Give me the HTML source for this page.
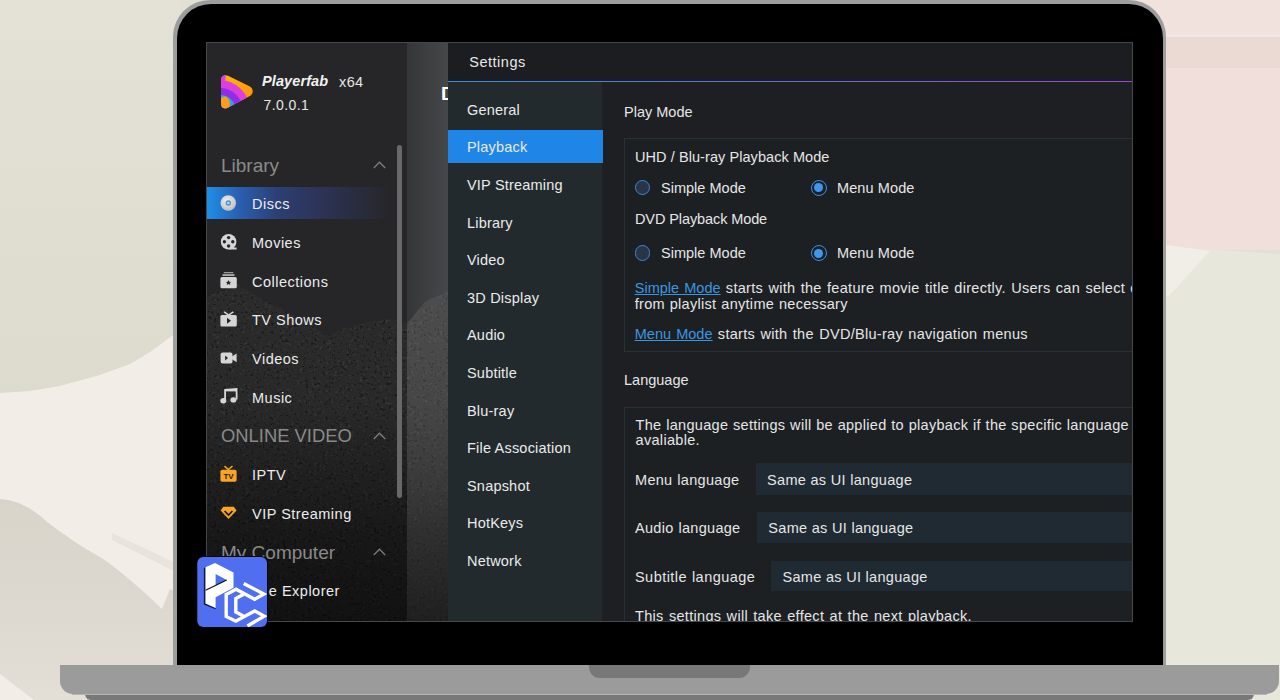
<!DOCTYPE html>
<html><head><meta charset="utf-8">
<style>
*{box-sizing:border-box;margin:0;padding:0}
html,body{width:1280px;height:700px;overflow:hidden;background:#e4e1d6}
body{position:relative;font-family:"Liberation Sans",sans-serif}
.abs{position:absolute}
#bg{position:absolute;left:0;top:0}
#lid{position:absolute;left:173px;top:0px;width:993px;height:670px;background:#9d9d9d;border-radius:37px 37px 0 0}
#bezel{position:absolute;left:177px;top:3.5px;width:986px;height:670px;background:#000;border-radius:34px 34px 0 0}
#base{position:absolute;left:60px;top:665px;width:1219px;height:29px;background:#9b9b9b;border-radius:0 0 13px 13px}
#notch{position:absolute;left:589px;top:665px;width:161px;height:13px;background:#787878;border-radius:0 0 11px 11px}
#foot{position:absolute;left:85px;top:694px;width:1169px;height:6px;background:#787878;border-radius:0 0 8px 8px}
#screen{position:absolute;left:206px;top:42px;width:927px;height:580px;overflow:hidden;background:#262628}
.t{position:absolute;white-space:nowrap;color:#e8e8e8;line-height:1}
</style></head><body>
<svg id="bg" width="1280" height="700" viewBox="0 0 1280 700">
  <defs><linearGradient id="gsh" x1="0" x2="0" y1="0" y2="1"><stop offset="0" stop-color="#d8d4ca"/><stop offset="0.5" stop-color="#dcd8cf"/><stop offset="1" stop-color="#e3dfd6"/></linearGradient><linearGradient id="gtop" x1="0" x2="0" y1="0" y2="1"><stop offset="0" stop-color="#e4e2d6"/><stop offset="1" stop-color="#dcdbce"/></linearGradient></defs>
  <rect width="1280" height="700" fill="#e2e0d4"/>
  <rect width="180" height="400" fill="url(#gtop)"/>
  <path d="M0 393 L30 391 L60 386 L100 375 L130 364 L150 352 L180 330 L180 700 L0 700 Z" fill="#f2eee7"/>
  <path d="M0 499 C15 500 30 506 46 521 C60 532 80 546 100 557 C120 570 140 588 162 609 L170 589 L180 594 L180 700 L0 700 Z" fill="url(#gsh)"/>
  <path d="M112 533 L180 565 L180 574 L112 540 Z" fill="#e8e4dc"/>
  <path d="M0 674 L34 700 L0 700 Z" fill="#f2eee7"/>
  <rect x="1100" y="0" width="180" height="250" fill="#f0dfda"/>
  <rect x="1100" y="0" width="180" height="35" fill="#f1e2de"/><rect x="1160" y="34" width="120" height="3" fill="#f3e6e2"/>
  <rect x="1160" y="37" width="120" height="31" fill="#ebd9d4"/>
  <path d="M1160 246 L1280 254 L1280 700 L1160 700 Z" fill="#e8e7dc"/>
  <path d="M1160 244 L1210 251 L1170 295 L1160 300 Z" fill="#f0eee6"/>
</svg>
<div id="lid"></div>
<div id="bezel"></div>
<div id="base"></div>
<div id="notch"></div>
<div id="foot"></div>
<div class="abs" style="left:72px;top:693.5px;width:1195px;height:1px;background:#b4b4b4"></div>
<div id="screen">
<svg class="abs" style="left:0;top:0" width="242" height="580" viewBox="206 42 242 580">
<defs>
<linearGradient id="strip" x1="0" x2="1" y1="0" y2="0"><stop offset="0" stop-color="#353637"/><stop offset="1" stop-color="#464748"/></linearGradient>
<linearGradient id="fade" x1="0" x2="0" y1="0" y2="1"><stop offset="0" stop-color="#000" stop-opacity="0"/><stop offset="0.35" stop-color="#000" stop-opacity="0.05"/><stop offset="0.75" stop-color="#000" stop-opacity="0.45"/><stop offset="1" stop-color="#000" stop-opacity="0.6"/></linearGradient>
<linearGradient id="stripm" x1="0" x2="0" y1="0" y2="1"><stop offset="0" stop-color="#fff" stop-opacity="0.16"/><stop offset="0.6" stop-color="#fff" stop-opacity="0.12"/><stop offset="1" stop-color="#fff" stop-opacity="0.06"/></linearGradient>
<filter id="gr" x="0" y="0" width="100%" height="100%" color-interpolation-filters="sRGB">
<feTurbulence type="fractalNoise" baseFrequency="0.35" numOctaves="3" seed="11" result="n"/>
<feColorMatrix in="n" type="matrix" values="0.33 0.33 0.33 0 0  0.33 0.33 0.33 0 0  0.33 0.33 0.33 0 0  0 0 0 0 1" result="g"/><feComponentTransfer in="g" result="d"><feFuncR type="discrete" tableValues="0.07 0.12 0.17 0.21 0.28"/><feFuncG type="discrete" tableValues="0.07 0.12 0.17 0.21 0.28"/><feFuncB type="discrete" tableValues="0.07 0.12 0.17 0.21 0.28"/><feFuncA type="linear" slope="0" intercept="1"/></feComponentTransfer>
<feComposite in="d" in2="SourceGraphic" operator="in"/>
</filter>
</defs>
<rect x="206" y="42" width="201" height="579" fill="#262628"/>
<rect x="407" y="42" width="41" height="579" fill="url(#strip)"/>
<path d="M206 297 L214 293 L222 291 L230 286 L238 284 L244 288 L250 292 L256 296 L262 299 L270 303 L280 308 L290 313 L300 318 L310 324 L318 330 L328 336 L334 333 L343 328 L352 326 L360 324 L368 322 L378 321 L386 319 L393 320 L400 321 L407 323 L412 318 L418 310 L425 302 L432 298 L440 295 L448 291 L448 621 L206 621 Z" fill="#fff" filter="url(#gr)"/>
<path d="M206 297 L214 293 L222 291 L230 286 L238 284 L244 288 L250 292 L256 296 L262 299 L270 303 L280 308 L290 313 L300 318 L310 324 L318 330 L328 336 L334 333 L343 328 L352 326 L360 324 L368 322 L378 321 L386 319 L393 320 L400 321 L407 323 L412 318 L418 310 L425 302 L432 298 L440 295 L448 291 L448 621 L206 621 Z" fill="url(#fade)"/>
<path d="M407 323 L412 318 L418 310 L425 302 L432 298 L440 295 L448 291 L448 621 L407 621 Z" fill="url(#stripm)"/>
</svg>
<div class="t" style="left:235px;top:41.72px;font-size:19px;color:#ffffff;font-weight:bold;">D</div>
<svg class="abs" style="left:13.5px;top:31.5px" width="35" height="37" viewBox="0 0 35 37">
<defs><clipPath id="tri"><path d="M1 7 C1 2 4 0 8 1.8 L29 12 C34 14.5 34 20 29 22.5 L8 33.5 C4 35.5 1 34 1 29 Z"/></clipPath>
<linearGradient id="yo" x1="0" y1="0" x2="1" y2="1"><stop offset="0" stop-color="#ffb80a"/><stop offset="1" stop-color="#ff8a10"/></linearGradient></defs>
<g clip-path="url(#tri)">
<rect x="0" y="0" width="35" height="37" fill="url(#yo)"/>
<circle cx="-1" cy="37" r="31" fill="#dc3ee0"/><path d="M0 0 L6 0 L5 8 L0 8 Z" fill="#dc3ee0"/>
<circle cx="0" cy="37" r="23" fill="#8f2ee6"/>
<circle cx="0" cy="37" r="16" fill="#2aa6e2"/>
<ellipse cx="4.5" cy="30" rx="5.5" ry="7.5" fill="#ff9c18"/>
</g>
</svg>
<div class="t" style="left:56px;top:32.42px;font-size:14.5px;color:#f2f2f2;font-weight:bold;font-style:italic;letter-spacing:0.1px;">Playerfab</div>
<div class="t" style="left:133px;top:32.92px;font-size:14.5px;color:#e6e6e6;letter-spacing:0.4px;">x64</div>
<div class="t" style="left:57.4px;top:55.66px;font-size:14px;color:#e6e6e6;letter-spacing:0.45px;">7.0.0.1</div>
<div class="abs" style="left:1px;top:145.4px;width:184px;height:32px;background:linear-gradient(90deg,#1d8fe8 0%,#2a60b2 17%,#2c3f74 38%,#2c3356 62%,rgba(38,38,42,0) 100%)"></div>
<div class="t" style="left:15px;top:113.72px;font-size:19px;color:#8a8a8a;">Library</div>
<svg class="abs" style="left:167px;top:119.0px" width="13" height="8" viewBox="0 0 13 8"><path d="M0.8 7 L6.5 1.2 L12.2 7" fill="none" stroke="#7c7c7c" stroke-width="1.3"/></svg>
<div class="t" style="left:15px;top:385.05px;font-size:18.4px;color:#8a8a8a;">ONLINE VIDEO</div>
<svg class="abs" style="left:167px;top:390.04px" width="13" height="8" viewBox="0 0 13 8"><path d="M0.8 7 L6.5 1.2 L12.2 7" fill="none" stroke="#7c7c7c" stroke-width="1.3"/></svg>
<div class="t" style="left:15px;top:500.92px;font-size:19px;color:#8a8a8a;">My Computer</div>
<svg class="abs" style="left:167px;top:506.2px" width="13" height="8" viewBox="0 0 13 8"><path d="M0.8 7 L6.5 1.2 L12.2 7" fill="none" stroke="#7c7c7c" stroke-width="1.3"/></svg>
<div class="t" style="left:46px;top:155.14px;font-size:14.5px;color:#ececec;letter-spacing:0.5px;">Discs</div>
<div class="t" style="left:46px;top:193.86px;font-size:14.5px;color:#ececec;letter-spacing:0.5px;">Movies</div>
<div class="t" style="left:46px;top:232.58px;font-size:14.5px;color:#ececec;letter-spacing:0.5px;">Collections</div>
<div class="t" style="left:46px;top:271.3px;font-size:14.5px;color:#ececec;letter-spacing:0.5px;">TV Shows</div>
<div class="t" style="left:46px;top:310.02px;font-size:14.5px;color:#ececec;letter-spacing:0.5px;">Videos</div>
<div class="t" style="left:46px;top:348.74px;font-size:14.5px;color:#ececec;letter-spacing:0.5px;">Music</div>
<div class="t" style="left:46px;top:426.18px;font-size:14.5px;color:#ececec;letter-spacing:0.5px;">IPTV</div>
<div class="t" style="left:46px;top:464.9px;font-size:14.5px;color:#ececec;letter-spacing:0.5px;">VIP Streaming</div>
<div class="t" style="left:46px;top:542.34px;font-size:14.5px;color:#ececec;letter-spacing:0.5px;">File Explorer</div>
<svg class="abs" style="left:14px;top:153px;overflow:visible" width="17" height="17" viewBox="0 0 17 17"><defs><radialGradient id="dg" cx="0.4" cy="0.35" r="0.7"><stop offset="0" stop-color="#eeeeee"/><stop offset="1" stop-color="#bdbdbd"/></radialGradient></defs><circle cx="8.3" cy="8" r="7.8" fill="url(#dg)"/><circle cx="8.3" cy="8" r="2.7" fill="#4a8fd6"/><circle cx="8.3" cy="8" r="1.3" fill="#cfd6de"/></svg>
<svg class="abs" style="left:14px;top:191px;overflow:visible" width="18" height="18" viewBox="0 0 18 18"><circle cx="8.6" cy="8.8" r="7.8" fill="#d6d6d6"/><path d="M8.6 16.4 L16.6 16.4 L16.6 14.6 L12 14.6 Z" fill="#d6d6d6"/><circle cx="8.6" cy="4.6" r="1.7" fill="#262628"/><circle cx="8.6" cy="13" r="1.7" fill="#262628"/><circle cx="4.4" cy="8.8" r="1.7" fill="#262628"/><circle cx="12.8" cy="8.8" r="1.7" fill="#262628"/></svg>
<svg class="abs" style="left:14px;top:229px;overflow:visible" width="18" height="19" viewBox="0 0 18 19"><rect x="3.8" y="1" width="9.6" height="1.3" fill="#9a9a9a"/><rect x="2.5" y="3.2" width="12" height="1.7" fill="#b8b8b8"/><rect x="0.4" y="6" width="16.4" height="11.3" rx="1.6" fill="#d6d6d6"/><path d="M8.5 9 L9.3 10.8 L11.2 10.9 L9.8 12.1 L10.3 14 L8.5 13 L6.7 14 L7.2 12.1 L5.8 10.9 L7.7 10.8 Z" fill="#262628"/></svg>
<svg class="abs" style="left:14px;top:268px;overflow:visible" width="18" height="18" viewBox="0 0 18 18"><path d="M4.2 1.9 L8.5 5.2 L13.4 1.9" fill="none" stroke="#d6d6d6" stroke-width="1.5"/><rect x="0.4" y="5" width="16.4" height="11.5" rx="1.6" fill="#d6d6d6"/><path d="M7 7.8 L11 10.8 L7 13.8 Z" fill="#262628"/></svg>
<svg class="abs" style="left:14px;top:309px;overflow:visible" width="18" height="14" viewBox="0 0 18 14"><rect x="0.6" y="1.4" width="11.9" height="11" rx="2" fill="#d6d6d6"/><path d="M12 5.5 L16.6 2.5 L16.6 11.3 L12 8.3 Z" fill="#d6d6d6"/><path d="M5.1 4.6 L8 7 L5.1 9.6 Z" fill="#262628"/></svg>
<svg class="abs" style="left:14px;top:346px;overflow:visible" width="18" height="17" viewBox="0 0 18 17"><path d="M5.1 12.5 L5.1 1.9 L16.6 1 L16.6 11.5" fill="none" stroke="#d6d6d6" stroke-width="1.8"/><rect x="5" y="1" width="11.6" height="2.4" fill="#d6d6d6"/><ellipse cx="3.3" cy="12.8" rx="3" ry="2.7" fill="#d6d6d6"/><ellipse cx="13.4" cy="11.9" rx="3" ry="2.7" fill="#d6d6d6"/></svg>
<svg class="abs" style="left:14px;top:423px;overflow:visible" width="18" height="18" viewBox="0 0 18 18"><path d="M4.5 1.1 L8.3 4.5 L12.5 1" fill="none" stroke="#f6a623" stroke-width="1.5"/><rect x="0.4" y="4.8" width="16.2" height="11.9" rx="1.8" fill="#f6a623"/><text x="8.5" y="14" font-family="Liberation Sans" font-weight="bold" font-size="8" text-anchor="middle" fill="#2a1a00">TV</text></svg>
<svg class="abs" style="left:14px;top:464px;overflow:visible" width="18" height="14" viewBox="0 0 18 14"><path d="M3.3 0.8 L13.9 0.8 L16.6 4.6 L8.5 13.1 L0.6 4.6 Z" fill="#f6a623"/><path d="M4.6 5 L8.5 9 L12.4 5" fill="none" stroke="#141414" stroke-width="1.7"/></svg>
<div class="abs" style="left:191px;top:103px;width:5px;height:353px;background:#68686a;border-radius:3px"></div>
<div class="abs" style="left:242px;top:0;width:685px;height:39px;background:#1b1d20"></div>
<div class="abs" style="left:242px;top:39px;width:685px;height:1px;background:linear-gradient(90deg,#3a90da,#6a6ad8 55%,#9a48d8)"></div>
<div class="t" style="left:263.3px;top:13.42px;font-size:14.5px;color:#e8e8e8;letter-spacing:0.5px;">Settings</div>
<div class="abs" style="left:242px;top:40px;width:154px;height:540px;background:#232a2d"></div>
<div class="abs" style="left:396px;top:40px;width:531px;height:540px;background:#1d1f22"></div>
<div class="abs" style="left:242px;top:88px;width:154.5px;height:32.8px;background:#1f86e8"></div>
<div class="t" style="left:261px;top:60.82px;font-size:14.5px;color:#eaeaea;letter-spacing:0.2px;">General</div>
<div class="t" style="left:261px;top:98.42px;font-size:14.5px;color:#eaeaea;letter-spacing:0.2px;">Playback</div>
<div class="t" style="left:261px;top:136.02px;font-size:14.5px;color:#eaeaea;letter-spacing:0.2px;">VIP Streaming</div>
<div class="t" style="left:261px;top:173.62px;font-size:14.5px;color:#eaeaea;letter-spacing:0.2px;">Library</div>
<div class="t" style="left:261px;top:211.22px;font-size:14.5px;color:#eaeaea;letter-spacing:0.2px;">Video</div>
<div class="t" style="left:261px;top:248.82px;font-size:14.5px;color:#eaeaea;letter-spacing:0.2px;">3D Display</div>
<div class="t" style="left:261px;top:286.42px;font-size:14.5px;color:#eaeaea;letter-spacing:0.2px;">Audio</div>
<div class="t" style="left:261px;top:324.02px;font-size:14.5px;color:#eaeaea;letter-spacing:0.2px;">Subtitle</div>
<div class="t" style="left:261px;top:361.62px;font-size:14.5px;color:#eaeaea;letter-spacing:0.2px;">Blu-ray</div>
<div class="t" style="left:261px;top:399.22px;font-size:14.5px;color:#eaeaea;letter-spacing:0.2px;">File Association</div>
<div class="t" style="left:261px;top:436.82px;font-size:14.5px;color:#eaeaea;letter-spacing:0.2px;">Snapshot</div>
<div class="t" style="left:261px;top:474.42px;font-size:14.5px;color:#eaeaea;letter-spacing:0.2px;">HotKeys</div>
<div class="t" style="left:261px;top:512.02px;font-size:14.5px;color:#eaeaea;letter-spacing:0.2px;">Network</div>
<div class="t" style="left:418px;top:62.92px;font-size:14.5px;color:#e6e6e6;">Play Mode</div>
<div class="abs" style="left:418px;top:96px;width:600px;height:213.60000000000002px;border:1px solid #2a3036;background:#1d2023"></div>
<div class="t" style="left:429px;top:107.92px;font-size:14.5px;color:#e6e6e6;letter-spacing:0.07px;">UHD / Blu-ray Playback Mode</div>
<div class="t" style="left:429px;top:170.42px;font-size:14.5px;color:#e6e6e6;letter-spacing:-0.1px;">DVD Playback Mode</div>
<div class="abs" style="left:428.6px;top:137.9px;width:15.2px;height:15.2px;border-radius:50%;border:1.5px solid #3b87d8;background:#2a3447"></div>
<div class="abs" style="left:604.75px;top:137.5px;width:16px;height:16px;border-radius:50%;border:1.5px solid #3b8fe3;background:#1d2023"></div>
<div class="abs" style="left:608.25px;top:141.0px;width:9px;height:9px;border-radius:50%;background:#3d97f0"></div>
<div class="t" style="left:455px;top:138.92px;font-size:14.5px;color:#e6e6e6;letter-spacing:0.02px;">Simple Mode</div>
<div class="t" style="left:631px;top:138.92px;font-size:14.5px;color:#e6e6e6;letter-spacing:0.1px;">Menu Mode</div>
<div class="abs" style="left:428.6px;top:203.4px;width:15.2px;height:15.2px;border-radius:50%;border:1.5px solid #3b87d8;background:#2a3447"></div>
<div class="abs" style="left:604.75px;top:203px;width:16px;height:16px;border-radius:50%;border:1.5px solid #3b8fe3;background:#1d2023"></div>
<div class="abs" style="left:608.25px;top:206.5px;width:9px;height:9px;border-radius:50%;background:#3d97f0"></div>
<div class="t" style="left:455px;top:204.42px;font-size:14.5px;color:#e6e6e6;letter-spacing:0.02px;">Simple Mode</div>
<div class="t" style="left:631px;top:204.42px;font-size:14.5px;color:#e6e6e6;letter-spacing:0.1px;">Menu Mode</div>
<div class="t" style="left:428.7px;top:239.42px;font-size:14.5px;color:#e6e6e6;letter-spacing:0.3px;word-spacing:0.95px;"><span style="color:#3d95e0;text-decoration:underline;letter-spacing:0.03px;">Simple Mode</span> starts with the feature movie title directly. Users can select other titles</div>
<div class="t" style="left:428.7px;top:254.62px;font-size:14.5px;color:#e6e6e6;letter-spacing:0.3px;word-spacing:0.5px;">from playlist anytime necessary</div>
<div class="t" style="left:428.7px;top:285.42px;font-size:14.5px;color:#e6e6e6;letter-spacing:0.3px;word-spacing:1.0px;"><span style="color:#3d95e0;text-decoration:underline;letter-spacing:0.03px;">Menu Mode</span> starts with the DVD/Blu-ray navigation menus</div>
<div class="t" style="left:418px;top:331.12px;font-size:14.5px;color:#e6e6e6;">Language</div>
<div class="abs" style="left:418px;top:364.6px;width:600px;height:300px;border:1px solid #2a3036;background:#1d2023"></div>
<div class="t" style="left:429.6px;top:376.12px;font-size:14.5px;color:#e6e6e6;letter-spacing:0.3px;word-spacing:0.4px;">The language settings will be applied to playback if the specific language is</div>
<div class="t" style="left:429.6px;top:391.42px;font-size:14.5px;color:#e6e6e6;letter-spacing:0.3px;">avaliable.</div>
<div class="t" style="left:429px;top:430.92px;font-size:14.5px;color:#e6e6e6;letter-spacing:0.3px;word-spacing:0.5px;">Menu language</div>
<div class="abs" style="left:549.6px;top:421.4px;width:500px;height:31.600000000000023px;background:#1f2a33"></div>
<div class="t" style="left:561.1px;top:430.92px;font-size:14.5px;color:#e6e6e6;letter-spacing:0.3px;">Same as UI language</div>
<div class="t" style="left:429px;top:479.42px;font-size:14.5px;color:#e6e6e6;letter-spacing:0.3px;word-spacing:0.5px;">Audio language</div>
<div class="abs" style="left:550.8px;top:469.7px;width:500px;height:31.30000000000001px;background:#1f2a33"></div>
<div class="t" style="left:562.3px;top:479.42px;font-size:14.5px;color:#e6e6e6;letter-spacing:0.3px;">Same as UI language</div>
<div class="t" style="left:429px;top:527.92px;font-size:14.5px;color:#e6e6e6;letter-spacing:0.45px;word-spacing:0.5px;">Subtitle language</div>
<div class="abs" style="left:565px;top:518.6px;width:500px;height:30.899999999999977px;background:#1f2a33"></div>
<div class="t" style="left:576.5px;top:527.92px;font-size:14.5px;color:#e6e6e6;letter-spacing:0.3px;">Same as UI language</div>
<div class="t" style="left:429px;top:567.42px;font-size:14.5px;color:#e6e6e6;letter-spacing:0.3px;word-spacing:1.0px;">This settings will take effect at the next playback.</div>
<div class="abs" style="left:0;top:0;width:927px;height:580px;border:1px solid #46494b"></div>
</div>
<svg class="abs" style="left:196px;top:555px" width="74" height="74" viewBox="0 0 74 74">
<defs><clipPath id="sq"><rect x="1.3" y="1.9" width="69.7" height="70" rx="6"/></clipPath></defs>
<rect x="0.3" y="0.9" width="71.7" height="72" rx="7" fill="#050505"/>
<rect x="1.3" y="1.9" width="69.7" height="70" rx="6" fill="#4f6ef0"/>
<g clip-path="url(#sq)">
<path d="M7.9 13 L9.5 12.2 L9.5 48.6 L19.6 52.9 L19.6 54.2 L7.9 49.6 Z" fill="#0c0c20" opacity="0.9"/>
<path d="M9.5 12.2 L19 7.9 L37.5 17.4 L37.5 32.8 L19.6 42.3 L19.6 52.9 L9.5 48.6 Z" fill="#ffffff"/>
<path d="M19.6 19 L30.7 25 L19.6 30.7 Z" fill="#4f6ef0"/>
<path d="M9.6 35.2 L30.7 25" stroke="#111" stroke-width="1.1"/>
<g fill="none" stroke="#ffffff" stroke-width="3.4" stroke-linejoin="miter">
<path d="M47.7 28.5 L67.9 39.1 L58.6 44.3 L40.1 34.3 L30.2 39.5 L30.2 61.4 L39.8 66.2 L58.6 55.9 L68.2 61.1 L51.4 71"/>
<path d="M47.3 39.5 L39.8 43.6 L39.8 57 L47.3 61.1"/>
</g>
</g>
</svg>
</body></html>
